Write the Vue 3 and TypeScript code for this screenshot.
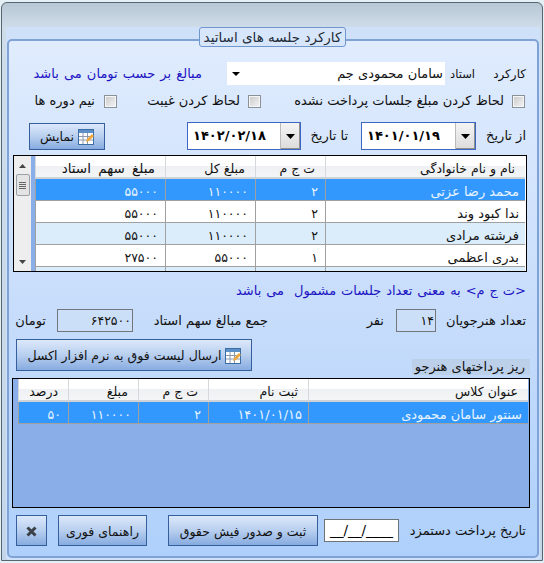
<script setup lang="ts">
const teacherRows = [
  { name: 'محمد رضا عزتی', count: '۲', total: '۱۱۰۰۰۰', share: '۵۵۰۰۰', cls: 'sel' },
  { name: 'ندا کبود وند', count: '۲', total: '۱۱۰۰۰۰', share: '۵۵۰۰۰', cls: '' },
  { name: 'فرشته مرادی', count: '۲', total: '۱۱۰۰۰۰', share: '۵۵۰۰۰', cls: 'alt' },
  { name: 'بدری اعظمی', count: '۱', total: '۵۵۰۰۰', share: '۲۷۵۰۰', cls: '' },
  { name: '', count: '', total: '', share: '', cls: 'alt' },
]
</script>

<template>
  <div class="window">
    <div class="panel">
      <div class="legend">کارکرد جلسه های اساتید</div>
      <div class="group">
        <div class="row r1">
          <span class="t w-kar">کارکرد</span>
          <span class="t w-ost">استاد</span>
          <div class="select">
            <span class="select-text">سامان محمودی جم</span>
            <svg class="tri-s" width="8" height="4" viewBox="0 0 8 4"><path d="M0 0h8L4 4z" fill="#000" /></svg>
          </div>
          <span class="t blue note1">مبالغ بر حسب تومان می باشد</span>
        </div>

        <div class="row r2">
          <i class="check c1"></i><span class="t l1">لحاظ کردن مبلغ جلسات پرداخت نشده</span>
          <i class="check c2"></i><span class="t l2">لحاظ کردن غیبت</span>
          <i class="check c3"></i><span class="t l3">نیم دوره ها</span>
        </div>

        <div class="row r3">
          <span class="t from">از تاریخ</span>
          <div class="date d1">
            <span class="date-text">۱۴۰۱/۰۱/۱۹</span>
            <span class="date-btn"><svg width="9" height="5" viewBox="0 0 9 5"><path d="M0 0h9L4.5 5z" fill="#000" /></svg></span>
          </div>
          <span class="t to">تا تاریخ</span>
          <div class="date d2">
            <span class="date-text">۱۴۰۲/۰۲/۱۸</span>
            <span class="date-btn"><svg width="9" height="5" viewBox="0 0 9 5"><path d="M0 0h9L4.5 5z" fill="#000" /></svg></span>
          </div>
          <button class="btn show">
            <svg class="ico" width="16" height="16" viewBox="0 0 16 16">
              <rect x="0.5" y="0.5" width="15" height="15" fill="#fff" stroke="#3b6ea5" />
              <path d="M1 1h14v3H1z" fill="#5b8fc8" />
              <path d="M1 7.5h14M1 11h14M5 4v11M9.5 4v11" stroke="#8a9bb0" fill="none" />
              <path d="M8 13l1-3 5-5 2 2-5 5z" fill="#f0a83c" />
            </svg>
            <span>نمایش</span>
          </button>
        </div>

        <div class="grid g1">
          <div class="g1-cols head">
            <span class="c">نام و نام خانوادگی</span>
            <span class="c">ت ج م</span>
            <span class="c">مبلغ کل</span>
            <span class="c wide">مبلغ سهم استاد</span>
          </div>
          <div v-for="(r, i) in teacherRows" :key="i" class="g1-cols line" :class="r.cls">
            <span class="c name">{{ r.name }}</span>
            <span class="c num">{{ r.count }}</span>
            <span class="c num">{{ r.total }}</span>
            <span class="c num">{{ r.share }}</span>
          </div>
          <div class="stripe s1"></div>
          <div class="scroll">
            <svg class="arr" width="7" height="4" viewBox="0 0 7 4"><path d="M0 4h7L3.5 0z" fill="#444" /></svg>
            <div class="thumb"><b></b><b></b><b></b><b></b></div>
            <svg class="arr dn" width="7" height="4" viewBox="0 0 7 4"><path d="M0 0h7L3.5 4z" fill="#444" /></svg>
          </div>
        </div>

        <div class="t blue note2">&lt;ت ج م&gt; به معنی تعداد جلسات مشمول&nbsp; می باشد</div>

        <div class="row r5">
          <span class="t s-a">تعداد هنرجویان</span>
          <span class="box b1">۱۴</span>
          <span class="t s-b">نفر</span>
          <span class="t s-c">جمع مبالغ سهم استاد</span>
          <span class="box b2">۶۴۲۵۰۰</span>
          <span class="t s-d">تومان</span>
        </div>

        <div class="row r6">
          <span class="t sub">ریز پرداختهای هنرجو</span>
          <button class="btn excel">
            <svg class="ico" width="16" height="16" viewBox="0 0 16 16">
              <rect x="0.5" y="0.5" width="15" height="15" fill="#fff" stroke="#3b6ea5" />
              <path d="M1 1h14v3H1z" fill="#5b8fc8" />
              <path d="M1 7.5h14M1 11h14M5 4v11M9.5 4v11" stroke="#8a9bb0" fill="none" />
              <path d="M8 13l1-3 5-5 2 2-5 5z" fill="#f0a83c" />
            </svg>
            <span>ارسال لیست فوق به نرم افزار اکسل</span>
          </button>
        </div>

        <div class="grid g2">
          <div class="g2-cols head">
            <span class="c">عنوان کلاس</span>
            <span class="c">ثبت نام</span>
            <span class="c">ت ج م</span>
            <span class="c">مبلغ</span>
            <span class="c">درصد</span>
          </div>
          <div class="g2-cols line sel">
            <span class="c name">سنتور سامان محمودی</span>
            <span class="c name">۱۴۰۱/۰۱/۱۵</span>
            <span class="c num">۲</span>
            <span class="c num">۱۱۰۰۰۰</span>
            <span class="c num">۵۰</span>
          </div>
          <div class="stripe s2"></div>
        </div>

        <div class="row r8">
          <span class="t pay">تاریخ پرداخت دستمزد</span>
          <span class="mask">__/__/____</span>
          <button class="btn save">ثبت و صدور فیش حقوق</button>
          <button class="btn help">راهنمای فوری</button>
          <button class="btn close">
            <svg width="11" height="11" viewBox="0 0 11 11"><path d="M1.5 1.5l8 8M9.5 1.5l-8 8" stroke="#3c4148" stroke-width="3" /></svg>
          </button>
        </div>
      </div>
    </div>
  </div>
</template>

<style>
html, body { margin: 0; background: #e4eff5; }
</style>

<style scoped>
.window {
  box-sizing: border-box;
  width: 542px;
  height: 559px;
  margin: 2px 1px 0;
  padding: 24px 2px 0 4px;
  background: linear-gradient(#b7c7d3, #cfddea 25px, #c4d6ea);
  border: 1px solid #566670;
  border-radius: 6px 6px 0 0;
  font-family: "DejaVu Sans", sans-serif;
  font-size: 13px;
  color: #111;
  direction: rtl;
}
.panel {
  position: relative;
  height: 100%;
  box-sizing: border-box;
  padding: 12px 1px 0;
  background: #cfe1f9;
  border-radius: 3px;
}
.legend {
  position: absolute;
  top: 0;
  left: 193px;
  width: 147px;
  height: 20px;
  box-sizing: border-box;
  line-height: 18px;
  text-align: center;
  color: #202a38;
  font-size: 13.5px;
  white-space: nowrap;
  background: #d8e6fb;
  border: 1px solid #6f97cc;
  border-radius: 3px;
  z-index: 2;
}
.group {
  box-sizing: border-box;
  height: 519px;
  border: 2px solid #7fa3d6;
  border-radius: 5px;
  background: linear-gradient(#e0ecfe, #c6dcfb 55%, #aed0fb);
  padding: 21px 11px 0 0;
}
.row { display: flex; align-items: center; }
.t { white-space: nowrap; line-height: 16px; }
.blue { color: #1c14c4; }
.r1 { height: 23px; }
.w-kar { width: 31px; margin-left: 20px; font-size: 12px; }
.w-ost { width: 21px; margin-left: 9px; font-size: 11.5px; }
.select {
  display: flex;
  justify-content: space-between;
  align-items: center;
  width: 218px;
  height: 23px;
  box-sizing: border-box;
  padding: 0 2px 0 5px;
  background: #fff;
  color: #111;
  margin-left: 25px;
}
.note1 { word-spacing: 1px; }
.r2 { height: 16px; margin-top: 8px; }
.check {
  display: block;
  flex: none;
  box-sizing: border-box;
  width: 13px;
  height: 13px;
  border: 1px solid #8b9199;
  background: linear-gradient(135deg, #c8c8c8, #e8e8e8 70%, #f2f2f2);
  box-shadow: inset 0 0 0 1px #f6f6f6;
}
.c1 { margin: 0 1px 0 8px; }
.l1 { width: 209px; margin-left: 34px; }
.c2 { margin-left: 8px; }
.l2 { width: 91px; margin-left: 32px; }
.c3 { margin-left: 9px; }
.r3 { height: 28px; margin-top: 13px; }
.from { width: 39px; margin-left: 11px; }
.to { width: 38px; margin-left: 9px; }
.date {
  display: flex;
  box-sizing: border-box;
  height: 28px;
  background: #fff;
  border: 1px solid #3d66c0;
  direction: ltr;
}
.d1 { width: 115px; margin-left: 13px; }
.d2 { width: 114px; margin-left: 82px; }
.date-text {
  flex: 1;
  text-align: left;
  padding-left: 5px;
  line-height: 25px;
  font-weight: 700;
  font-size: 13px;
  letter-spacing: 1.1px;
  color: #000;
}
.date-btn {
  display: flex;
  align-items: center;
  justify-content: center;
  width: 19px;
  background: linear-gradient(#f4f4f4, #dcdcdc);
  border-left: 1px solid #bbb;
  box-shadow: inset -1px -1px 0 #8f8f8f;
}
.btn {
  display: flex;
  align-items: center;
  justify-content: center;
  gap: 4px;
  box-sizing: border-box;
  padding: 1px 0 0;
  border: 1px solid #355f9c;
  background: linear-gradient(#dce8fa, #b8cfef 50%, #87abe0);
  font: inherit;
  font-size: 12.5px;
  color: #111;
  direction: rtl;
}
.show { width: 76px; height: 27px; }
.grid {
  position: relative;
  box-sizing: border-box;
  border: 1px solid #000;
  overflow: hidden;
}
.g1 { width: 514px; height: 117px; margin: 5px -1px 0 0; background: #fff; padding: 0 1px 0 21px; }
.g1-cols { display: grid; grid-template-columns: 200px 70px 90px 130px; }
.g2-cols { display: grid; grid-template-columns: 220px 100px 70px 70px 50px; }
.head {
  height: 23px;
  overflow: hidden;
  background: linear-gradient(#fff, #fff 45%, #eef0f3 50%, #f4f5f6);
  border-bottom: 2px solid #cfd3d8;
  box-sizing: border-box;
}
.head .c { border-left: 1px solid #d5d8dc; line-height: 25px; padding-right: 10px; font-size: 12.5px; }
.head .wide { font-size: 13.5px; word-spacing: 3px; }
.line { height: 22px; overflow: hidden; box-sizing: border-box; border-bottom: 1px solid #a0a0a0; }
.c {
  display: block;
  padding-right: 6px;
  line-height: 25px;
  white-space: nowrap;
  overflow: hidden;
  border-left: 1px solid #a0a0a0;
  font-size: 13px;
  color: #111;
}
.c.num { font-size: 12.5px; padding-right: 7px; }
.line.sel { background: #3398fd; }
.line.sel .c { color: #e8f4ff; }
.line.alt { background: #dbedfa; }
.stripe { position: absolute; top: 0; bottom: 0; background: #8aaee8; }
.s1 { left: 17px; width: 4px; }
.s2 { left: 0; width: 5px; }
.scroll {
  position: absolute;
  left: 0;
  top: 0;
  bottom: 0;
  width: 17px;
  box-sizing: border-box;
  padding-top: 8px;
  display: flex;
  flex-direction: column;
  align-items: center;
  background: #eeeeee;
}
.arr { flex: none; }
.arr.dn { margin-top: auto; margin-bottom: 7px; }
.thumb {
  width: 14px;
  height: 22px;
  margin-top: 6px;
  box-sizing: border-box;
  border: 1px solid #9aa0a6;
  border-radius: 2px;
  background: #e4e4e4;
  display: flex;
  flex-direction: column;
  align-items: center;
  justify-content: center;
  gap: 1px;
}
.thumb b { display: block; width: 7px; height: 1px; background: #666; }
.note2 { margin-top: 10px; word-spacing: 0.8px; line-height: 18px; height: 16px; }
.r5 { height: 23px; margin-top: 11px; }
.s-a { width: 81px; margin-left: 9px; }
.box {
  box-sizing: border-box;
  height: 23px;
  line-height: 21px;
  padding-right: 1px;
  border: 1px solid #73777c;
  background: #ccdff8;
  font-size: 12.5px;
}
.b1 { width: 40px; margin-left: 12px; }
.s-b { width: 15px; margin-left: 101px; }
.s-c { width: 125px; margin-left: 10px; }
.b2 { width: 76px; margin-left: 11px; }
.r6 {
  height: 38px;
  margin: 7px -4px 0 0;
  padding-left: 7px;
  align-items: flex-start;
  justify-content: space-between;
}
.sub {
  align-self: flex-end;
  box-sizing: border-box;
  width: 118px;
  height: 16px;
  margin-bottom: 2px;
  padding-right: 5px;
  background: #bdd0ea;
  overflow: hidden;
}
.excel { width: 236px; height: 32px; gap: 3px; }
.g2 { width: 518px; height: 130px; margin: 1px -4px 0 0; background: #8aaee8; padding: 0 1px 0 5px; }
.r8 { height: 31px; margin-top: 7px; }
.pay { width: 116px; margin-left: 11px; }
.mask {
  display: block;
  box-sizing: border-box;
  width: 75px;
  height: 23px;
  line-height: 20px;
  background: #fff;
  border: 1px solid #6e7377;
  text-align: center;
  direction: ltr;
  margin-left: 6px;
  font-size: 13.5px;
  color: #000;
}
.save { width: 150px; height: 31px; margin-left: 21px; }
.help { width: 89px; height: 31px; margin-left: 11px; }
.close { width: 31px; height: 31px; }
</style>
